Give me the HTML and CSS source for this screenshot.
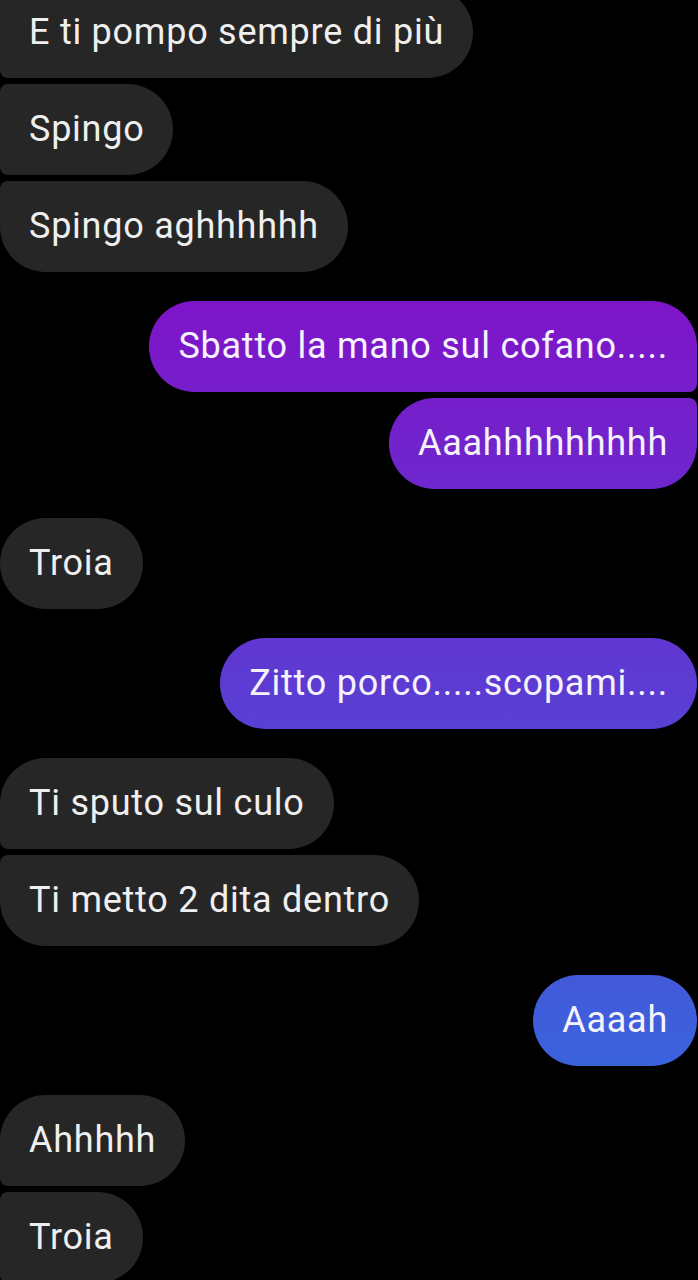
FILE: index.html
```html
<!DOCTYPE html>
<html lang="it">
<head>
<meta charset="utf-8">
<title>Chat</title>
<link rel="stylesheet" href="styles.css">
</head>
<body>
<main class="chat">
  <section class="group in">
    <div class="bubble mid">E ti pompo sempre di più</div>
    <div class="bubble mid">Spingo</div>
    <div class="bubble last">Spingo aghhhhhh</div>
  </section>
  <section class="group out">
    <div class="bubble first">Sbatto la mano sul cofano.....</div>
    <div class="bubble last">Aaahhhhhhhhh</div>
  </section>
  <section class="group in">
    <div class="bubble single">Troia</div>
  </section>
  <section class="group out">
    <div class="bubble single">Zitto porco.....scopami....</div>
  </section>
  <section class="group in">
    <div class="bubble first">Ti sputo sul culo</div>
    <div class="bubble last">Ti metto 2 dita dentro</div>
  </section>
  <section class="group out">
    <div class="bubble single">Aaaah</div>
  </section>
  <section class="group in">
    <div class="bubble first">Ahhhhh</div>
    <div class="bubble mid">Troia</div>
  </section>
</main>
</body>
</html>
```
FILE: styles.css
```css
html, body {
  margin: 0;
  padding: 0;
  background: #000;
}
body {
  width: 698px;
  height: 1280px;
  overflow: hidden;
  font-family: Roboto, "Noto Sans", sans-serif;
}
.chat {
  display: flex;
  flex-direction: column;
  gap: 29px;
  margin-top: -13px;
  padding-right: 1px;
}
.group {
  display: flex;
  flex-direction: column;
  gap: 6px;
}
.group.in { align-items: flex-start; }
.group.out { align-items: flex-end; }
.bubble {
  box-sizing: border-box;
  height: 91px;
  display: flex;
  align-items: center;
  padding: 0 29px 2px 29px;
  font-size: 36px;
  letter-spacing: 0.75px;
  line-height: 1;
  white-space: nowrap;
}
.in .bubble {
  background: #262626;
  color: #efefef;
}
.out .bubble {
  color: #f6f2fb;
  background: linear-gradient(to bottom, #8410c6 0px, #7e14c8 300px, #3a63dc 1070px, #2f6edf 1280px);
  background-attachment: fixed;
}
.in .mid { border-radius: 8px 46px 46px 8px; }
.in .first { border-radius: 46px 46px 46px 8px; }
.in .last { border-radius: 8px 46px 46px 46px; }
.in .single { border-radius: 46px; }
.out .first { border-radius: 46px 46px 8px 46px; }
.out .last { border-radius: 46px 8px 46px 46px; }
.out .mid { border-radius: 46px 8px 8px 46px; }
.out .single { border-radius: 46px; }
```
